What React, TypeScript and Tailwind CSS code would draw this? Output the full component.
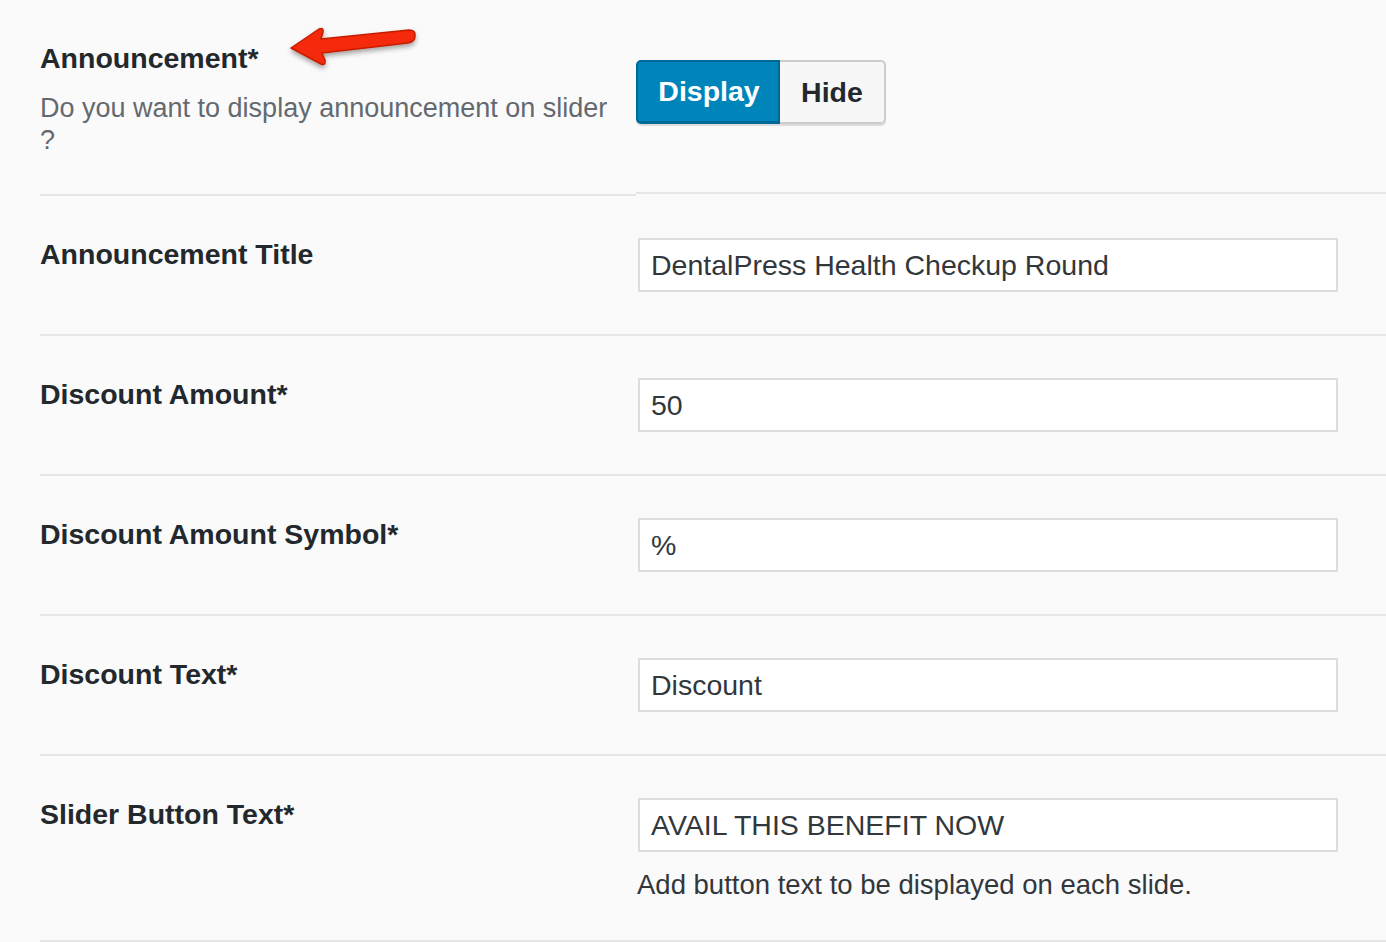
import React from "react"

const font = { fontFamily: '"Liberation Sans", Arial, sans-serif' }

function Arrow() {
    return (
        <svg width="140" height="60" viewBox="0 0 140 60" className="absolute left-[242px] top-[18px]">
            <defs>
                <filter id="sh" x="-20%" y="-30%" width="140%" height="170%">
                    <feDropShadow dx="0" dy="3" stdDeviation="2.5" floodColor="#000" floodOpacity="0.35" />
                </filter>
            </defs>
            <path
                d="M9 30 L37 11 Q42 9 41 14 L39 21 L127 12 Q134 12 133 18 Q133 24 126 25 L40 35 L43 42 Q44 48 39 46 Z"
                fill="#f52a08"
                stroke="#c41e00"
                strokeWidth="1.5"
                strokeLinejoin="round"
                filter="url(#sh)"
            />
        </svg>
    )
}

function Field({ label, value, help }: { label: string; value: string; help?: string }) {
    return (
        <div className="flex border-b-2 border-[#e6e6e6]">
            <div className="w-[598px] shrink-0 pt-[37px] text-[28.5px] font-bold text-[#23282d]">{label}</div>
            <div className={help ? "flex-1 pt-[42px] pb-[38px]" : "flex-1 pt-[42px] pb-[42px]"}>
                <div className="w-[700px] h-[54px] border-2 border-[#dddddd] bg-white flex items-center px-[11px] text-[28.5px] text-[#32373c]">
                    {value}
                </div>
                {help && <div className="mt-[16px] -ml-[1px] text-[27.5px] text-[#32373c] leading-[34px]">{help}</div>}
            </div>
        </div>
    )
}

export default function App() {
    return (
        <div className="min-h-screen bg-[#fafafa] pl-[40px] relative overflow-hidden" style={font}>
            {/* Announcement toggle */}
            <div className="flex items-start">
                <div className="w-[596px] shrink-0 pt-[40px] h-[196px] border-b-2 border-[#e6e6e6] relative">
                    <div className="text-[28.5px] font-bold text-[#23282d] leading-[36px]">Announcement*</div>
                    <div className="mt-[16px] w-[580px] text-[27px] text-[#646970] leading-[32px]">
                        Do you want to display announcement on slider ?
                    </div>
                    <Arrow />
                </div>
                <div className="flex-1 h-[194px] border-b-2 border-[#e6e6e6] pt-[60px]">
                    <div className="flex w-[250px] h-[64px] rounded-[5px] shadow-[0_2px_0_#dcdcdc]">
                        <button className="w-[144px] rounded-l-[5px] bg-[#0085ba] border-2 border-[#006799] border-b-[3px] pl-[2px] text-white text-[28.5px] font-bold">
                            Display
                        </button>
                        <button className="flex-1 rounded-r-[5px] bg-[#f7f7f7] border-2 border-l-0 border-[#cccccc] text-[#23282d] text-[28.5px] font-bold">
                            Hide
                        </button>
                    </div>
                </div>
            </div>

            <Field label="Announcement Title" value="DentalPress Health Checkup Round" />
            <Field label="Discount Amount*" value="50" />
            <Field label="Discount Amount Symbol*" value="%" />
            <Field label="Discount Text*" value="Discount" />
            <Field label="Slider Button Text*" value="AVAIL THIS BENEFIT NOW" help="Add button text to be displayed on each slide." />
        </div>
    )
}
